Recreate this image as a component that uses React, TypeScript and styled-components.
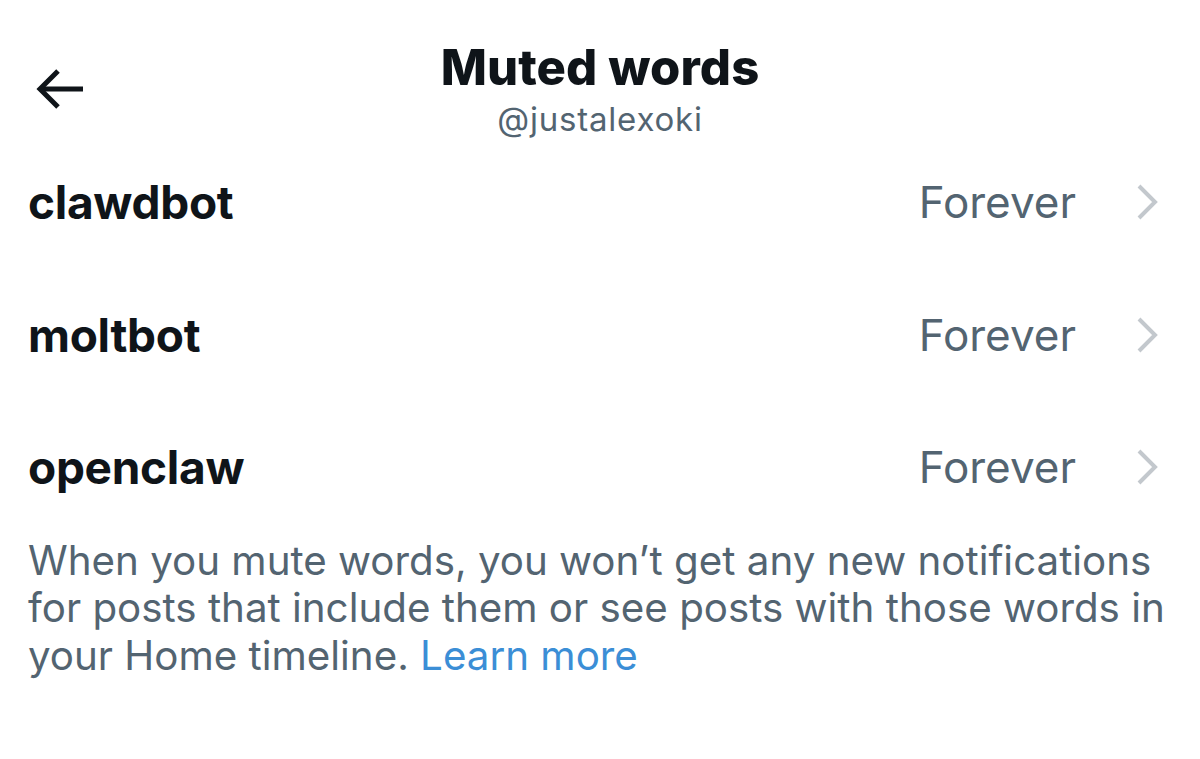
import React from "react";
import styled, { createGlobalStyle } from "styled-components";

const Global = createGlobalStyle`
  html, body { margin: 0; padding: 0; background: #ffffff; }
  body { font-family: Inter, "Noto Sans", "Liberation Sans", sans-serif; -webkit-font-smoothing: antialiased; }
`;

const Page = styled.div`
  width: 1200px;
  height: 759px;
  background: #ffffff;
  overflow: hidden;
`;

const Header = styled.header`
  display: grid;
  grid-template-columns: 1fr auto 1fr;
  grid-template-rows: auto auto;
  padding-top: 38px;
`;

const BackButton = styled.div`
  grid-column: 1;
  grid-row: 1 / span 2;
  align-self: center;
  margin-top: 4px;
  padding-left: 35px;
  display: flex;
  align-items: center;
`;

const Title = styled.h1`
  grid-column: 2;
  grid-row: 1;
  margin: 0;
  font-size: 49px;
  line-height: 60px;
  font-weight: 800;
  color: #0f1419;
  text-align: center;
  letter-spacing: 0.1px;
`;

const Handle = styled.div`
  grid-column: 2;
  grid-row: 2;
  margin-top: 4px;
  font-size: 33px;
  line-height: 34px;
  color: #536471;
  text-align: center;
  letter-spacing: 0.8px;
`;

const List = styled.div`
  display: flex;
  flex-direction: column;
`;

const Row = styled.div`
  height: 132.5px;
  display: flex;
  align-items: center;
  padding: 0 42px 0 28px;
`;

const Word = styled.div`
  flex: 1;
  font-size: 46px;
  font-weight: 700;
  color: #0f1419;
  letter-spacing: -0.3px;
`;

const Duration = styled.div`
  font-size: 44px;
  color: #536471;
  margin-right: 60px;
`;

const Chevron = styled.svg`
  display: block;
  width: 22px;
  height: 36px;
`;

const Note = styled.p`
  margin: 3px 0 0;
  padding: 0 24px 0 28px;
  font-size: 40.3px;
  line-height: 47.5px;
  color: #536471;
`;

const Link = styled.a`
  color: #3b8ed6;
  text-decoration: none;
`;

const words = ["clawdbot", "moltbot", "openclaw"];

export default function App() {
  return (
    <Page>
      <Global />
      <Header>
        <BackButton>
          <svg width="48" height="42" viewBox="0 0 48 42" fill="none">
            <path d="M48 21H5" stroke="#0f1419" strokeWidth="5" />
            <path d="M23 3L5 21L23 39" stroke="#0f1419" strokeWidth="5" />
          </svg>
        </BackButton>
        <Title>Muted words</Title>
        <Handle>@justalexoki</Handle>
      </Header>
      <List>
        {words.map((w) => (
          <Row key={w}>
            <Word>{w}</Word>
            <Duration>Forever</Duration>
            <Chevron viewBox="0 0 22 36" fill="none">
              <polyline points="3,2 19,18 3,34" stroke="#c3c8cd" strokeWidth="4" />
            </Chevron>
          </Row>
        ))}
      </List>
      <Note>
        When you mute words, you won’t get any new notifications for posts that include them or see posts with those words in your Home timeline. <Link href="#">Learn more</Link>
      </Note>
    </Page>
  );
}
